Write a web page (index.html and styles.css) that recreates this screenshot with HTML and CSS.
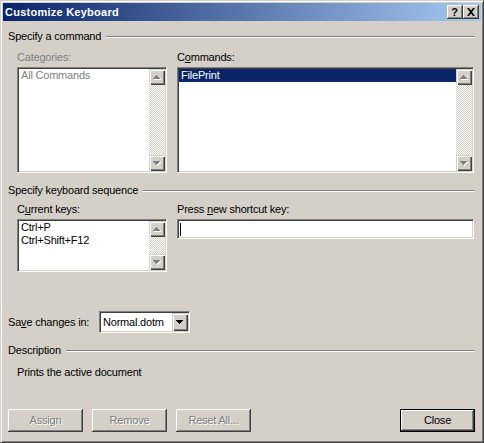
FILE: index.html
```html
<!DOCTYPE html>
<html>
<head>
<meta charset="utf-8">
<link rel="stylesheet" href="styles.css">
</head>
<body>
<div class="window">
  <div class="titlebar">
    <span class="title">Customize Keyboard</span>
    <div class="tbtns">
      <span class="tbtn help">?</span>
      <span class="tbtn">
        <svg width="16" height="14" viewBox="0 0 16 14"><path d="M4 3h2l2 2.5L10 3h2L9 7l3 4h-2L8 8.5 6 11H4l3-4z" fill="#000"/></svg>
      </span>
    </div>
  </div>
  <div class="content">
    <div class="group"><span>Specify a command</span><i class="rule"></i></div>
    <div class="cols first">
      <div class="col">
        <div class="label dis">Categories:</div>
        <div class="list tall">
          <div class="items"><div class="item dis">All Commands</div></div>
          <div class="vscroll">
            <span class="sbtn"><svg width="16" height="16" viewBox="0 0 16 16"><path d="M8 7h1v1h1v1h1v1h1v1H5v-1h1V9h1V8h1z" fill="#fff"/><path d="M7 6h1v1h1v1h1v1h1v1H4V9h1V8h1V7h1z" fill="#808080"/></svg></span>
            <span class="track"></span>
            <span class="sbtn"><svg width="16" height="16" viewBox="0 0 16 16"><path d="M5 7h7v1h-1v1h-1v1H9v1H8v-1H7V9H6V8H5z" fill="#fff"/><path d="M4 6h7v1h-1v1H9v1H8v1H7V9H6V8H5V7H4z" fill="#808080"/></svg></span>
          </div>
        </div>
      </div>
      <div class="col">
        <div class="label">C<u>o</u>mmands:</div>
        <div class="list tall">
          <div class="items"><div class="item sel">FilePrint</div></div>
          <div class="vscroll">
            <span class="sbtn"><svg width="16" height="16" viewBox="0 0 16 16"><path d="M8 7h1v1h1v1h1v1h1v1H5v-1h1V9h1V8h1z" fill="#fff"/><path d="M7 6h1v1h1v1h1v1h1v1H4V9h1V8h1V7h1z" fill="#808080"/></svg></span>
            <span class="track"></span>
            <span class="sbtn"><svg width="16" height="16" viewBox="0 0 16 16"><path d="M5 7h7v1h-1v1h-1v1H9v1H8v-1H7V9H6V8H5z" fill="#fff"/><path d="M4 6h7v1h-1v1H9v1H8v1H7V9H6V8H5V7H4z" fill="#808080"/></svg></span>
          </div>
        </div>
      </div>
    </div>

    <div class="group second"><span>Specify keyboard sequence</span><i class="rule"></i></div>
    <div class="cols keys">
      <div class="col">
        <div class="label">C<u>u</u>rrent keys:</div>
        <div class="list short">
          <div class="items">
            <div class="item">Ctrl+P</div>
            <div class="item">Ctrl+Shift+F12</div>
          </div>
          <div class="vscroll">
            <span class="sbtn"><svg width="16" height="16" viewBox="0 0 16 16"><path d="M8 7h1v1h1v1h1v1h1v1H5v-1h1V9h1V8h1z" fill="#fff"/><path d="M7 6h1v1h1v1h1v1h1v1H4V9h1V8h1V7h1z" fill="#808080"/></svg></span>
            <span class="track"></span>
            <span class="sbtn"><svg width="16" height="16" viewBox="0 0 16 16"><path d="M5 7h7v1h-1v1h-1v1H9v1H8v-1H7V9H6V8H5z" fill="#fff"/><path d="M4 6h7v1h-1v1H9v1H8v1H7V9H6V8H5V7H4z" fill="#808080"/></svg></span>
          </div>
        </div>
      </div>
      <div class="col">
        <div class="label">Press <u>n</u>ew shortcut key:</div>
        <div class="edit"><span class="caret"></span></div>
      </div>
    </div>

    <div class="saverow">
      <span class="savelabel">Sa<u>v</u>e changes in:</span>
      <div class="combo">
        <span class="combotext">Normal.dotm</span>
        <span class="combobtn"><svg width="16" height="18" viewBox="0 0 16 18"><path d="M4 7h7v1h-1v1H9v1H8v1H7v-1H6V9H5V8H4z" fill="#000"/></svg></span>
      </div>
    </div>

    <div class="group third"><span>Description</span><i class="rule"></i></div>
    <div class="desc">Prints the active document</div>

    <div class="buttons">
      <span class="btn dis">Assign</span>
      <span class="btn dis">Remove</span>
      <span class="btn dis">Reset All...</span>
      <span class="btn default">Close</span>
    </div>
  </div>
</div>
</body>
</html>
```

FILE: styles.css
```css
html, body {
  margin: 0;
  padding: 0;
  background: #d4d0c8;
}

body {
  font-family: "Liberation Sans", Arial, sans-serif;
  font-size: 11px;
  letter-spacing: -0.2px;
  color: #000;
}

.window {
  width: 484px;
  height: 443px;
  box-sizing: border-box;
  border: 1px solid;
  border-color: #d4d0c8 #404040 #404040 #d4d0c8;
  box-shadow: inset 1px 1px #fff, inset -1px -1px #808080;
  padding: 2px;
  background: #d4d0c8;
  overflow: hidden;
}

.titlebar {
  height: 18px;
  display: flex;
  align-items: center;
  padding: 0 2px 0 2px;
  background: linear-gradient(to right, #0a246a, #a6caf0);
  color: #fff;
}

.title {
  font-weight: bold;
  font-size: 11px;
  letter-spacing: 0.25px;
  line-height: 13px;
}

.tbtns {
  margin-left: auto;
  display: flex;
}

.tbtn {
  width: 16px;
  height: 14px;
  box-sizing: border-box;
  background: #d4d0c8;
  box-shadow: inset -1px -1px #404040, inset 1px 1px #fff, inset -2px -2px #808080;
  display: flex;
  align-items: center;
  justify-content: center;
  color: #000;
}

.tbtn svg {
  display: block;
}

.help {
  font-weight: bold;
  font-size: 11px;
  line-height: 14px;
  letter-spacing: 0;
  padding-right: 1px;
}

.content {
  padding: 9px 6px 0 5px;
}

.group {
  display: flex;
  align-items: center;
  height: 13px;
  line-height: 13px;
}

.rule {
  flex: 1;
  margin-left: 5px;
  height: 0;
  border-top: 1px solid #808080;
  border-bottom: 1px solid #fff;
}

.group.second {
  margin-top: 11px;
}

.group.third {
  margin-top: 11px;
}

.cols {
  display: grid;
  grid-template-columns: 150px 297px;
  column-gap: 10px;
  padding-left: 9px;
}

.cols.first {
  margin-top: 8px;
}

.cols.keys {
  margin-top: 6px;
}

.label {
  height: 13px;
  line-height: 13px;
  margin-bottom: 3px;
  white-space: nowrap;
}

.dis {
  color: #808080;
}

.list {
  box-sizing: border-box;
  display: flex;
  background: #fff;
  border: 1px solid;
  border-color: #808080 #fff #fff #808080;
  box-shadow: inset 1px 1px #404040, inset -1px -1px #d4d0c8;
  padding: 1px;
}

.list.tall {
  height: 106px;
}

.list.short {
  height: 53px;
}

.items {
  flex: 1;
  min-width: 0;
}

.item {
  height: 13px;
  line-height: 13px;
  padding-left: 2px;
  white-space: nowrap;
}

.item.sel {
  background: #0a246a;
  color: #fff;
}

.vscroll {
  width: 16px;
  display: flex;
  flex-direction: column;
}

.sbtn {
  width: 16px;
  height: 16px;
  flex: none;
  background: #d4d0c8;
  box-shadow: inset 1px 1px #d4d0c8, inset 2px 2px #fff, inset -1px -1px #404040, inset -2px -2px #808080;
}

.sbtn svg {
  display: block;
}

.track {
  flex: 1;
  background-color: #fff;
  background-image: repeating-conic-gradient(#d4d0c8 0 25%, #fff 0 50%);
  background-size: 2px 2px;
}

.edit {
  box-sizing: border-box;
  height: 20px;
  background: #fff;
  border: 1px solid;
  border-color: #808080 #fff #fff #808080;
  box-shadow: inset 1px 1px #404040, inset -1px -1px #d4d0c8;
  padding: 2px 2px 2px 2px;
  display: flex;
  align-items: flex-start;
}

.caret {
  display: block;
  width: 1px;
  height: 13px;
  margin-top: 1px;
  background: #000;
}

.saverow {
  display: flex;
  align-items: center;
  margin-top: 39px;
  height: 22px;
}

.savelabel {
  width: 91px;
  line-height: 13px;
  white-space: nowrap;
}

.combo {
  box-sizing: border-box;
  width: 91px;
  height: 22px;
  background: #fff;
  border: 1px solid;
  border-color: #808080 #fff #fff #808080;
  box-shadow: inset 1px 1px #404040, inset -1px -1px #d4d0c8;
  padding: 1px;
  display: flex;
  align-items: stretch;
}

.combotext {
  flex: 1;
  padding-left: 2px;
  line-height: 18px;
  white-space: nowrap;
}

.combobtn {
  width: 16px;
  background: #d4d0c8;
  box-shadow: inset 1px 1px #d4d0c8, inset 2px 2px #fff, inset -1px -1px #404040, inset -2px -2px #808080;
}

.combobtn svg {
  display: block;
}

.desc {
  margin-top: 9px;
  padding-left: 9px;
  height: 13px;
  line-height: 13px;
}

.buttons {
  display: flex;
  gap: 9px;
  margin-top: 30px;
}

.btn {
  width: 75px;
  height: 23px;
  box-sizing: border-box;
  background: #d4d0c8;
  box-shadow: inset -1px -1px #404040, inset 1px 1px #fff, inset -2px -2px #808080;
  display: flex;
  align-items: center;
  justify-content: center;
  line-height: 13px;
}

.btn.dis {
  color: #808080;
  text-shadow: 1px 1px #fff;
}

.btn.default {
  margin-left: auto;
  border: 1px solid #000;
}
```
